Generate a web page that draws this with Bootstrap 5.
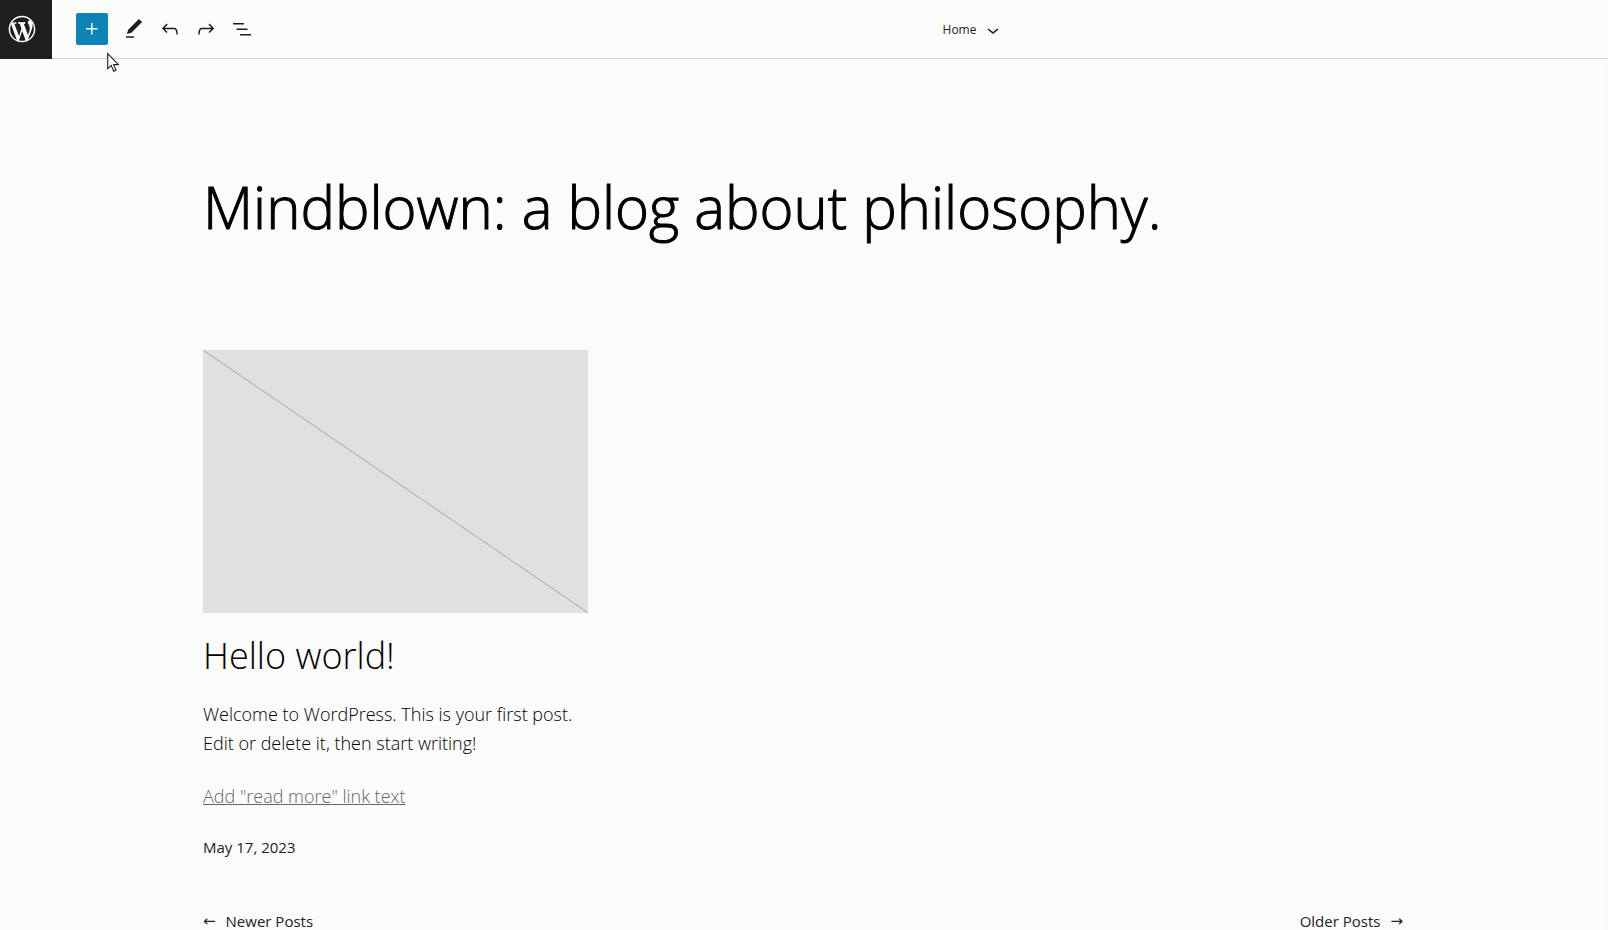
<!DOCTYPE html>
<html lang="en">
<head>
<meta charset="utf-8">
<meta name="viewport" content="width=device-width, initial-scale=1">
<title>Home – Editor</title>
<link rel="stylesheet" href="https://cdn.jsdelivr.net/npm/bootstrap@5.3.0/dist/css/bootstrap.min.css">
<style>
body { font-family: "Open Sans", "Noto Sans", sans-serif; font-weight: 300; background: #fbfbfb; color: #000; }
.editor-bar { background: #fcfdfa; box-shadow: inset 0 -1px #d3d3d3; height: 59px; }
.site-hub { width: 52px; background: #1e1e1e; padding: 0 0 1px 6px; }
.tools { width: 282px; padding: 0 0 1px 24px; }
.tool { width: 36px; height: 36px; color: #1e1e1e; }
.tool-add { width: 32px; height: 32px; background: #0d84b5; color: #fff; border-radius: 2px; margin-right: 8px; }
.tool svg, .tool-add svg, .doc-title svg { fill: currentColor; display: block; }
.doc-title { font-size: 12px; color: #1e1e1e; gap: 5px; margin-left: 6px; }
.pointer { position: absolute; left: 107px; top: 52px; z-index: 5; pointer-events: none; }
.canvas { border-right: 2px solid #f9f9f9; }
.wrap { max-width: 1200px; }
.site-title { font-size: 58px; line-height: 70px; margin-top: 113px; margin-bottom: 108px; font-weight: 300; -webkit-text-stroke: 1px currentColor; }
.post-grid { display: grid; grid-template-columns: repeat(3, 1fr); gap: 22px; }
.thumb { height: 263px; background: #e0e0e0; }
.post-title { font-size: 36px; line-height: 44px; margin: 21px 0 22px; font-weight: 300; }
.excerpt { font-size: 18px; line-height: 29px; margin-bottom: 24px; }
.more { font-size: 18px; line-height: 29px; color: #666; }
.meta, .pager, .pager a { font-size: 15px; line-height: 24px; font-weight: 400; color: #222; }
.meta { margin-top: 24px; }
.pager { margin-top: 50px; }
.pager a { gap: 10px; }
.arrow { font-family: "DejaVu Sans", sans-serif; }
</style>
</head>
<body>
<div class="vh-100 d-flex flex-column overflow-hidden position-relative">
  <header class="editor-bar d-flex flex-shrink-0">
    <a href="#" class="site-hub d-flex align-items-center" aria-label="WordPress">
      <svg width="32" height="32" viewBox="-2 -2 24 24" fill="#fff"><path d="M20 10c0-5.51-4.49-10-10-10C4.48 0 0 4.49 0 10c0 5.52 4.48 10 10 10 5.51 0 10-4.48 10-10zM7.78 15.37L4.37 6.22c.55-.02 1.17-.08 1.17-.08.5-.06.44-1.13-.06-1.11 0 0-1.45.11-2.37.11-.18 0-.37 0-.58-.01C4.12 2.69 6.87 1.11 10 1.11c2.33 0 4.45.87 6.05 2.34-.68-.11-1.65.39-1.65 1.58 0 .74.45 1.36.9 2.1.35.61.55 1.36.55 2.46 0 1.49-1.4 5-1.4 5l-3.03-8.37c.54-.02.82-.17.82-.17.5-.05.44-1.25-.06-1.22 0 0-1.44.12-2.38.12-.87 0-2.33-.12-2.33-.12-.5-.03-.56 1.2-.06 1.22l.92.08 1.26 3.41zM17.41 10c.24-.64.74-1.87.43-4.25.7 1.29 1.05 2.71 1.05 4.25 0 3.29-1.73 6.24-4.4 7.78.97-2.59 1.94-5.2 2.92-7.78zM6.1 18.09C3.12 16.65 1.11 13.53 1.11 10c0-1.3.23-2.48.72-3.59C3.25 10.3 4.67 14.2 6.1 18.09zm4.03-6.63l2.58 6.98c-.86.29-1.76.45-2.71.45-.79 0-1.57-.11-2.29-.33.81-2.38 1.62-4.74 2.42-7.1z"/></svg>
    </a>
    <div class="tools d-flex align-items-center" role="toolbar" aria-label="Document tools">
      <button type="button" class="tool-add border-0 p-0 d-flex align-items-center justify-content-center" aria-label="Add block"><svg width="24" height="24" viewBox="0 0 24 24"><path d="M11 12.5V17.5H12.5V12.5H17.5V11H12.5V6H11V11H6V12.5H11Z"/></svg></button>
      <button type="button" class="tool btn border-0 p-0 d-flex align-items-center justify-content-center" aria-label="Tools"><svg width="24" height="24" viewBox="0 0 24 24"><path d="M20.1 5.1L16.9 2 6.2 12.7l-1.3 4.4 4.5-1.3L20.1 5.1zM4 20.8h8v-1.5H4v1.5z"/></svg></button>
      <button type="button" class="tool btn border-0 p-0 d-flex align-items-center justify-content-center" aria-label="Undo"><svg width="24" height="24" viewBox="0 0 24 24"><path d="M18.3 11.7c-.6-.6-1.4-.9-2.3-.9H6.7l2.9-3.3-1.1-1-4.5 5L8.5 16l1-1-2.7-2.7H16c.5 0 .9.2 1.3.5 1 1 1 3.4 1 4.5v.3h1.5v-.2c0-1.5 0-4.3-1.5-5.7z"/></svg></button>
      <button type="button" class="tool btn border-0 p-0 d-flex align-items-center justify-content-center" aria-label="Redo"><svg width="24" height="24" viewBox="0 0 24 24"><path d="M15.6 6.5l-1.1 1 2.9 3.3H8c-.9 0-1.7.3-2.3.9-1.4 1.5-1.4 4.2-1.4 5.6v.2h1.5v-.3c0-1.1 0-3.5 1-4.5.3-.3.7-.5 1.3-.5h9.2L14.5 15l1.1 1.1 4.6-4.6-4.6-5z"/></svg></button>
      <button type="button" class="tool btn border-0 p-0 d-flex align-items-center justify-content-center" aria-label="List view"><svg width="24" height="24" viewBox="0 0 24 24"><path d="M3 6h11v1.5H3V6Zm3.5 5.5h11V13h-11v-1.5ZM21 17H10v1.5h11V17Z"/></svg></button>
    </div>
    <div class="flex-grow-1 d-flex align-items-center justify-content-center">
      <button type="button" class="doc-title btn border-0 p-0 d-flex align-items-center">Home <svg width="24" height="24" viewBox="0 0 24 24"><path d="M17.5 11.6L12 16l-5.5-4.4.9-1.2L12 14l4.5-3.6 1 1.2z"/></svg></button>
    </div>
  </header>
  <svg class="pointer" width="13" height="21" viewBox="0 0 13 21" aria-hidden="true"><path d="M.7 1.5v15.2l3.5-3.3 2.5 5.8 2.4-1-2.5-5.6h4.8z" fill="#fff" stroke="#1e1e1e" stroke-width="1.1"/></svg>

  <main class="canvas flex-grow-1 overflow-hidden">
    <div class="wrap mx-auto">
      <h1 class="site-title">Mindblown: a blog about philosophy.</h1>
      <div class="post-grid">
        <article>
          <svg class="thumb d-block w-100" viewBox="0 0 100 100" preserveAspectRatio="none" aria-hidden="true"><path d="M0 0 100 100" stroke="#a6a6a6" stroke-width="1" vector-effect="non-scaling-stroke"/></svg>
          <h2 class="post-title">Hello world!</h2>
          <p class="excerpt">Welcome to WordPress. This is your first post. Edit or delete it, then start writing!</p>
          <a href="#" class="more d-inline-block">Add "read more" link text</a>
          <div class="meta"><time datetime="2023-05-17">May 17, 2023</time></div>
        </article>
      </div>
      <nav class="pager d-flex justify-content-between" aria-label="Posts">
        <a href="#" class="d-flex text-decoration-none"><span class="arrow">←</span>Newer Posts</a>
        <a href="#" class="d-flex text-decoration-none">Older Posts<span class="arrow">→</span></a>
      </nav>
    </div>
  </main>
</div>
<script src="https://cdn.jsdelivr.net/npm/bootstrap@5.3.0/dist/js/bootstrap.bundle.min.js"></script>
</body>
</html>
